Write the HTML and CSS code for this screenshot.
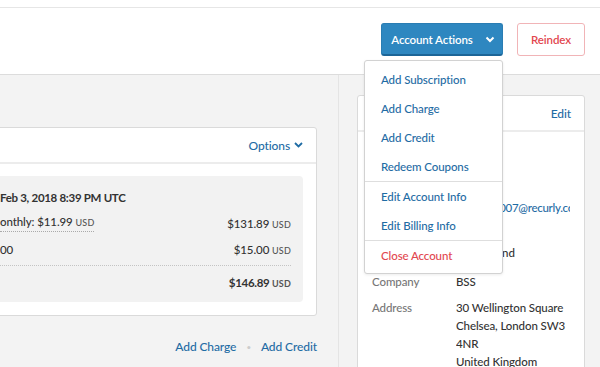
FILE: index.html
```html
<!DOCTYPE html>
<html>
<head>
<meta charset="utf-8">
<link rel="stylesheet" href="styles.css">
</head>
<body>
<div class="topbar"></div>
<header class="header">
  <div class="actions">
    <button class="btn btn-primary">Account Actions
      <svg class="chev" width="10" height="7" viewBox="0 0 10 7"><path d="M1.5 1.5 L5 5 L8.5 1.5" fill="none" stroke="#fff" stroke-width="2"/></svg>
    </button>
    <ul class="menu">
      <li><a>Add Subscription</a></li>
      <li><a>Add Charge</a></li>
      <li><a>Add Credit</a></li>
      <li><a>Redeem Coupons</a></li>
      <li class="divider"></li>
      <li><a>Edit Account Info</a></li>
      <li><a>Edit Billing Info</a></li>
      <li class="divider"></li>
      <li><a class="danger">Close Account</a></li>
    </ul>
  </div>
  <button class="btn btn-danger">Reindex</button>
</header>
<main class="main">
  <section class="left">
    <div class="card sub-card">
      <div class="card-head">
        <a class="options">Options
          <svg width="9" height="6" viewBox="0 0 9 6"><path d="M1 1 L4.5 4.5 L8 1" fill="none" stroke="#1f6ca4" stroke-width="1.8"/></svg>
        </a>
      </div>
      <div class="card-body">
        <div class="bill">
          <div class="row bold"><span>Feb 3, 2018 8:39 PM UTC</span></div>
          <div class="row"><span class="dotted">onthly: $11.99 <small>USD</small></span><span>$131.89 <small>USD</small></span></div>
          <div class="row"><span>00</span><span>$15.00 <small>USD</small></span></div>
          <div class="sep"></div>
          <div class="row bold total"><span></span><span>$146.89 <small>USD</small></span></div>
        </div>
      </div>
    </div>
    <div class="links">
      <a>Add Charge</a><span class="dot">•</span><a>Add Credit</a>
    </div>
  </section>
  <section class="right">
    <div class="card info-card">
      <div class="card-head"><a class="edit">Edit</a></div>
      <dl class="info">
        <div class="irow"><dt>Account</dt><dd>1007</dd></div>
        <div class="irow"><dt>Name</dt><dd>Jon</dd></div>
        <div class="irow email"><dt>Email</dt><dd><a>ben+tst1007@recurly.com</a></dd></div>
        <div class="irow last"><dt>Last Name</dt><dd>Jon Holland</dd></div>
        <div class="irow"><dt>Company</dt><dd>BSS</dd></div>
        <div class="irow"><dt>Address</dt><dd>30 Wellington Square<br>Chelsea, London SW3<br>4NR<br>United Kingdom</dd></div>
      </dl>
    </div>
  </section>
</main>
</body>
</html>
```

FILE: styles.css
```css
* { box-sizing: border-box; }
html, body { margin: 0; padding: 0; }
body {
  font-family: Lato, "Open Sans", sans-serif;
  font-size: 11.5px;
  font-weight: 500;
  letter-spacing: -0.1px;
  color: #333;
  background: #fff;
  width: 600px;
  height: 367px;
  overflow: hidden;
}
a { color: #1f6ca4; cursor: pointer; }

.topbar { height: 8px; border-bottom: 1px solid #e6e6e6; }

.header {
  height: 67px;
  border-bottom: 1px solid #dcdcdc;
  display: flex;
  justify-content: flex-end;
  align-items: flex-start;
  padding: 15px 15px 0 0;
  gap: 14px;
}
.actions { position: relative; }
.btn {
  font-family: inherit;
  font-size: 11.5px;
  letter-spacing: -0.1px;
  font-weight: 600;
  height: 33px;
  border-radius: 3px;
  padding: 0;
  display: flex;
  align-items: center;
  justify-content: center;
  white-space: nowrap;
}
.btn-primary {
  width: 122px;
  background: #2e87c0;
  color: #fff;
  border: 1px solid #2a7db3;
  border-bottom: 2px solid #1c6597;
  gap: 12px;
  padding-left: 2px;
}
.btn-danger {
  width: 68px;
  background: #fff;
  color: #e2474f;
  border: 1px solid #f1b4b7;
}

.menu {
  position: absolute;
  right: 0;
  top: 37px;
  width: 139px;
  margin: 0;
  padding: 4px 0 3px;
  list-style: none;
  background: #fff;
  border: 1px solid #d2d2d2;
  border-radius: 3px;
  box-shadow: 0 1px 3px rgba(0,0,0,0.08);
  z-index: 10;
}
.menu li a {
  display: flex;
  align-items: center;
  height: 29px;
  padding-left: 16px;
  white-space: nowrap;
}
.menu li a.danger { color: #e2474f; }
.menu .divider { height: 1px; background: #dedede; }

.main {
  display: flex;
  background: #f3f3f3;
  height: 292px;
}
.left {
  width: 339px;
  flex: none;
  border-right: 1px solid #e4e4e4;
  padding: 52px 21px 0 0;
  overflow: hidden;
}
.card {
  background: #fff;
  border: 1px solid #dadada;
  border-radius: 3px;
}
.sub-card { margin-left: -30px; }
.card-head {
  height: 36px;
  border-bottom: 2px solid #ececec;
  display: flex;
  justify-content: flex-end;
  align-items: center;
  padding-right: 13px;
}
.options { display: flex; align-items: center; gap: 4px; font-size: 12px; }
.card-body { padding: 12px 13px 13px 0; }
.bill {
  background: #f2f2f2;
  border-radius: 4px;
  padding: 8px 12px 7px 29px;
}
.row {
  height: 26px;
  display: flex;
  justify-content: space-between;
  align-items: center;
  white-space: nowrap;
}
.row.bold { font-weight: 700; letter-spacing: -0.3px; }
.row small { font-size: 9px; color: #555; font-weight: 500; letter-spacing: 0.2px; }
.row.bold small { font-weight: 700; }
.dotted { border-bottom: 1px dotted #aaa; line-height: 16px; }
.sep { border-top: 1px dotted #c4c4c4; margin-top: 3px; }
.total { margin-top: 3px; }
.links {
  display: flex;
  justify-content: flex-end;
  align-items: center;
  margin-top: 23px;
  gap: 10px;
  font-size: 12px;
}
.dot { color: #ccc; font-size: 8px; }

.right {
  flex: 1;
  padding: 20px 15px 0 18px;
  overflow: hidden;
}
.info-card { height: 300px; }
.edit { font-size: 12px; }
.info { margin: 0; padding: 15px 14px 0 14px; }
.irow { display: flex; margin-bottom: 8px; line-height: 18px; }
.irow.email { margin-bottom: 27px; }
.irow.email a { letter-spacing: -0.3px; }
.irow.last { margin-bottom: 11px; }
.irow dt { width: 84px; flex: none; color: #777; }
.irow dd { margin: 0; white-space: nowrap; overflow: hidden; flex: 1; min-width: 0; }
```
